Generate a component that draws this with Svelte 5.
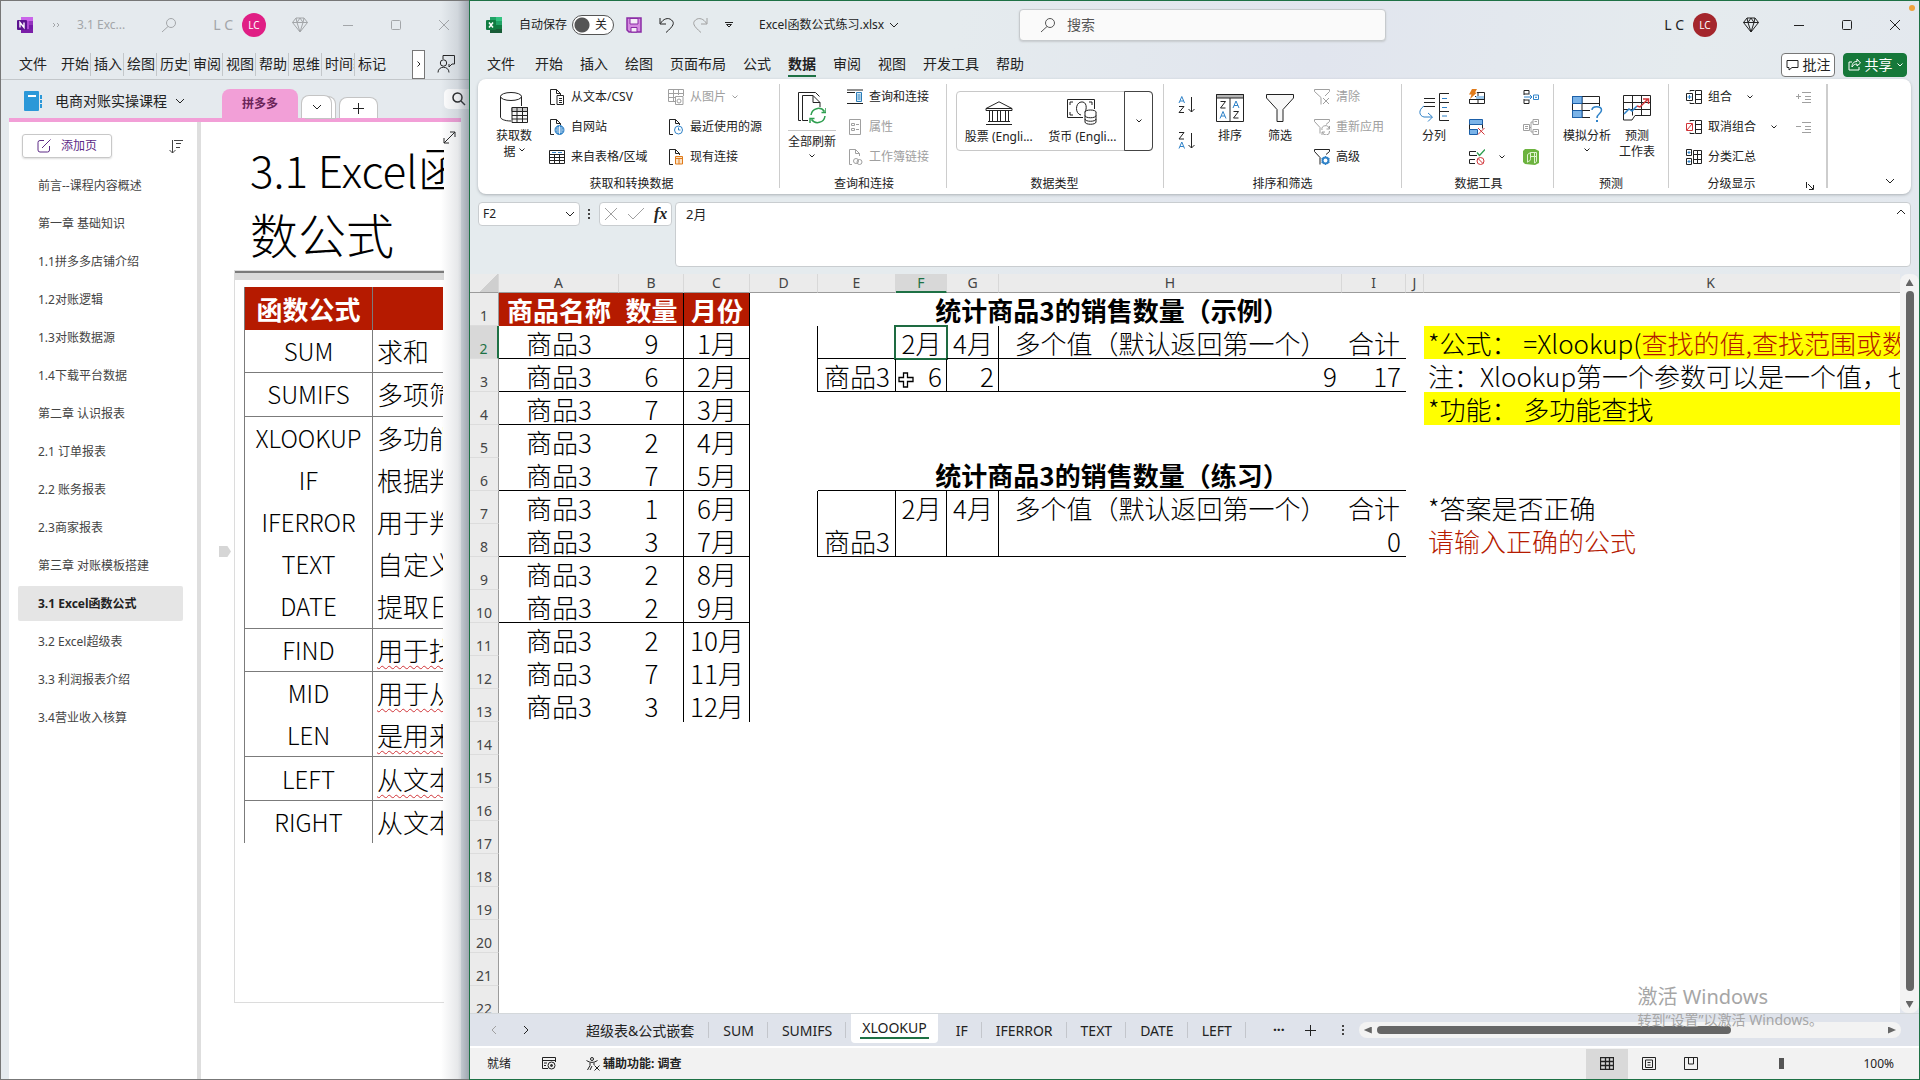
<script>
  // [width, height, markup]
  const icons = {
    onenote: [16, 16, '<path d="M4 0h12v16H4z" fill="#ae4bd5"/><path d="M4 0h12v4H4z" fill="#ca64ea"/><path d="M12 4h4v4h-4z" fill="#9332bf"/><path d="M12 8h4v4h-4z" fill="#7719aa"/><path d="M4 12h12v4H4z" fill="#7a1fa8"/><rect y="3" width="10" height="10" rx="1" fill="#5b1390"/><path d="M3 10.500v-5l4 5v-5" stroke="#fff" stroke-width="1.400"/>'],
    excel: [16, 16, '<path d="M4 0h12v16H4z" fill="#21a366"/><path d="M10 0h6v4h-6z" fill="#33c481"/><path d="M4 8h12v8H4z" fill="#107c41"/><path d="M4 12h12v4H4z" fill="#185c37"/><rect y="3" width="10" height="10" rx="1" fill="#107c41"/><path d="M3 5.500l4 5M7 5.500l-4 5" stroke="#fff" stroke-width="1.500"/>'],
    more: [8, 6, '<path d="M1 1l2 2-2 2M5 1l2 2-2 2"/>'],
    search: [16, 16, '<circle cx="10" cy="6" r="4.500"/><path d="M7 9.500L1 15"/>'],
    find: [14, 14, '<circle cx="5.500" cy="5.500" r="4.500" stroke-width="1.500"/><path d="M9 9l4 4" stroke-width="1.500"/>'],
    gem: [16, 16, '<path d="M4 1h8l3.500 4.500L8 15 .5 5.500zM.5 5.500h15M4 1l1 4.500L8 15l3-9.500L12 1M5 5.500L8 1l3 4.500"/>'],
    min: [10, 10, '<path d="M0 5.500h10"/>'],
    max: [10, 10, '<rect x=".5" y=".5" width="9" height="9" rx="1"/>'],
    close: [10, 10, '<path d="M0 0l10 10M10 0L0 10"/>'],
    person: [18, 18, '<path d="M6 4V.5h11.500V9H15l-3 3V9"/><circle cx="6.500" cy="8" r="3.200"/><path d="M1 17.500c0-7 11-7 11 0"/>'],
    chevDown: [10, 6, '<path d="M1 1l4 4 4-4"/>'],
    chevSmall: [6, 4, '<path d="M.5.5L3 3 5.500.5"/>'],
    chevUp: [10, 6, '<path d="M1 5l4-4 4 4"/>'],
    chevLeft: [6, 10, '<path d="M5 1L1 5l4 4"/>'],
    chevRight: [6, 10, '<path d="M1 1l4 4-4 4"/>'],
    plus: [11, 11, '<path d="M5.500 0v11M0 5.500h11"/>'],
    dots: [4, 12, '<path d="M1 1h2v2H1zM1 5h2v2H1zM1 9h2v2H1z" fill="#444" stroke="none"/>'],
    notebook: [18, 20, '<rect width="15" height="20" rx="1" fill="#2b98d8" stroke="none"/><path d="M4 4h8v2H4z" fill="#fff" stroke="none"/><path d="M16 4h2v4h-2zM16 9h2v3h-2zM16 13h2v4h-2z" fill="#2b98d8" stroke="none"/>'],
    compose: [14, 14, '<path d="M7 1.500H3a2 2 0 0 0-2 2V11a2 2 0 0 0 2 2h7.500a2 2 0 0 0 2-2V7M5 9l8.500-8.500"/>'],
    sortList: [14, 15, '<path d="M3.500 1v13M.5 11l3 3 3-3M5 1.500h9M7 4.500h5M7 8.500h4"/>'],
    expand: [13, 13, '<path d="M1 12L12 1M7 1h5v5M1 7v5h5"/>'],
    save: [16, 16, '<path d="M1 1h14v14H3l-2-2z" fill="#d58be0" stroke="#8a2da5" stroke-width="1.500"/><path d="M4 1.500h8V7H4zM5 10.500h6V15H5z" fill="#f5eef7" stroke="#8a2da5"/>'],
    undo: [16, 16, '<path d="M1 1v6h6M1.500 6.500C4 2 9 0 12.500 3s2 6-5.500 12.500"/>'],
    redo: [16, 16, '<path d="M15 1v6H9M14.500 6.500C12 2 7 0 3.500 3s-2 6 5.500 12.500"/>'],
    custom: [8, 6, '<path d="M0 .5h8M1.500 2.500h5L4 5z"/>'],
    comment: [13, 12, '<path d="M1 1.500h11v7H6l-3 2.500V8.500H1z"/>'],
    share: [13, 13, '<path d="M4 4H1v8h10V9M4 9c0-4 2-5.500 5-5.500V1l3.500 4L9 8V6C7 6 5.500 6.500 4 9z"/>'],
    getData: [28, 32, '<ellipse cx="11" cy="4.500" rx="10.500" ry="4"/><path d="M.5 4.500V25c0 2 4 4 10.500 4M21.500 4.500V14"/><path d="M12 15.500h15.500v15H12z" fill="#f7f7f7"/><path d="M12 15.500h15.500v4H12z" fill="#c9c9c9"/><path d="M12 23.500h15.500M12 27h15.500M17 16v15M22.500 16v15"/>'],
    csv: [16, 16, '<path d="M6 15.500H1.500V.5h6l4 4V6M7.500.5v4h4M8 6.500h6.500v9H8zM10 9.500h3M10 11.500h3M10 13.500h3"/>'],
    web: [16, 16, '<path d="M5 15.500H1.500V.5h6l4 4V6M7.500.5v4h4"/><circle cx="10.500" cy="11" r="4.500" fill="#2f82c8" stroke="#2f82c8"/><path d="M6.500 11h8M10.500 7v8M7.500 9h6M7.500 13h6" stroke="#fff" stroke-width=".8"/>'],
    range: [16, 16, '<path d="M.5 1.500h15v13H.5zM.5 5.500h15M.5 8.500h15M.5 11.500h15M5.500 5.500v9M10.500 5.500v9"/><path d="M3 3.500h4M9 3.500h4" stroke="#2f82c8"/>'],
    picture: [16, 16, '<path d="M8 12.500H.5V.5h15V7M.5 4.500h15M.5 8.500H8M5.500.5v12M10.500.5V6M7.500 7.500H15v8H7.500z"/><circle cx="11" cy="12" r="2"/>'],
    recent: [16, 16, '<path d="M5 15.500H1.500V.5h6l4 4V6M7.500.5v4h4"/><circle cx="10.500" cy="11" r="4" stroke="#2f82c8"/><path d="M10.500 8.500V11h2" stroke="#2f82c8"/>'],
    existing: [16, 16, '<path d="M5 15.500H1.500V.5h6l4 4V6M7.500.5v4h4"/><path d="M7.500 7.500h7v7.500h-7z" fill="#fbe3c8" stroke="#e07b1a"/><path d="M7.500 9.500h7M11 9.500V15" stroke="#e07b1a"/>'],
    refresh: [28, 32, '<path d="M3 28.500H.5V.5h17l4 4"/><path d="M10 28.500H4.500V3.500H15l7 7V15M15 3.500v7h7"/><path d="M13 23a7.500 7.500 0 0 1 13.500-3.500M28 16v4.500h-4.500M27 24a7.500 7.500 0 0 1-13.500 3.500M12 31v-4.500h4.500" stroke="#2e9e4f" stroke-width="1.500"/>'],
    queries: [16, 16, '<path d="M0 1h16M0 14.500h16M0 3.500h8"/><path d="M9.500 3.500h5v9h-5z" stroke="#2b7cb8" fill="#d9ecf8"/><path d="M10.500 6h3M10.500 8h3M10.500 10h3" stroke="#2b7cb8"/>'],
    props: [16, 16, '<path d="M2.500.5h11v15h-11zM4.500 4.500h3v2h-3zM4.500 9.500h3v2h-3zM9 5.500h3M9 10.500h3"/>'],
    links: [16, 16, '<path d="M5 15.500H2.500V.5h6l4 4V7M8.500.5v4h4"/><circle cx="9" cy="12" r="2.500"/><circle cx="12.500" cy="13" r="2.500"/>'],
    bank: [28, 24, '<path d="M1 7.500L14 .8l13 6.700zM1 7.500v2h26v-2M3 20.500h22M1 23.500h26M4.500 10v10M7.500 10v10M12.500 10v10M15.500 10v10M20.500 10v10M23.500 10v10"/>'],
    money: [30, 26, '<path d="M16 18.500H.5V.5h27V10M3 6V3h3M3 13v3h3M22 3h3v3M14 16c-6-1-6-12 0-13s6 7 4 10"/><ellipse cx="23.500" cy="13" rx="5.500" ry="2"/><path d="M18 13v10c0 3 11 3 11 0V13M18 16.500c0 3 11 3 11 0M18 20c0 3 11 3 11 0" fill="#fff"/>'],
    sortAZ: [17, 18, '<path d="M1 7l2.800-6.500L6.500 7M2 5h3.600" stroke="#2f82c8"/><path d="M1 10.500h5L1 16.500h5M13.500 1v15M10.500 13l3 3 3-3"/>'],
    sortZA: [17, 18, '<path d="M1 .500h5L1 7h5M13.500 1v15M10.500 13l3 3 3-3"/><path d="M1 16.500l2.800-6.500 2.700 6.500M2 14.500h3.600" stroke="#2f82c8"/>'],
    sort: [28, 28, '<path d="M.5.5h27v27H.5zM14 4v24"/><path d="M.5.5h27v3.500H.5z" fill="#b5b5b5"/><path d="M4.500 7.500h5L4.500 14h5M17.500 17.500h5l-5 6.500h5"/><path d="M4 24.500l3-7 3 7M5 22h4M17 14l3-7 3 7M18 11.500h4" stroke="#2f82c8"/>'],
    funnel: [28, 28, '<path d="M.5.5h27v3.500L17 15.500v12h-6v-12L.5 4z" fill="#f7f7f7"/>'],
    clear: [16, 16, '<path d="M7 15.500V8.500L.5 2.500v-2h15v2L11 7"/><path d="M9 9l6 6M15 9l-6 6"/>'],
    reapply: [16, 16, '<path d="M6 14.500V8.500L.5 2.500v-2h15v2L12 5.500"/><path d="M8 11a3.500 3.500 0 0 1 7-1.500M15.500 7v3h-3M15.500 12a3.500 3.500 0 0 1-7 1M8 16v-3h3"/>'],
    advanced: [16, 16, '<path d="M6 15.500V8.500L.5 2.500v-2h15v2L12 5.500"/><circle cx="11.500" cy="11.500" r="3" stroke="#2f82c8" stroke-width="2"/><path d="M11.500 7v2M11.500 14v2M7.500 9.500l2 1M13.500 12.500l2 1M7.500 13.500l2-1M13.500 10.500l2-1" stroke="#2f82c8"/>'],
    columns: [30, 30, '<path d="M5 5.500h11M5 9.500h11M5 13.500h11M30 .5h-9.500v27H30M20.500 9.500H30M20.500 18.500H30"/><path d="M23 5.500h5M23 14.500h5M23 23h5M5 13C-1 17 0 23 5 24h8M9 20l4.500 4L9 28.500" stroke="#2f82c8"/>'],
    flash: [16, 16, '<path d="M8 3.500h7.500v11H.500V10M.5 10.500h15M6 7.500h9.500M9 4v10"/><path d="M7 7h8v3H7z" fill="#9cc8ec" stroke="none"/><path d="M3 0h5L6 3.500h2L1 10l1.500-4.500H0z" fill="#e07b1a" stroke="none"/>'],
    dupes: [16, 16, '<path d="M.5.5h13v5H.5zM.5 10.500h8v5h-8z" fill="#7ab3e8" stroke="#1b5fa8"/><path d="M.5 5.500v5M13.500 5.500v4"/><path d="M9 9l6.500 6.500M15.500 9L9 15.500" stroke="#d13438"/>'],
    validate: [16, 16, '<path d="M7 2.500H.500v4H8M6 10.500H.500v4H6"/><path d="M8 3.500l2.500 3L16 .5" stroke="#2e9e4f" stroke-width="1.300"/><circle cx="11.500" cy="12" r="3.500" stroke="#d13438"/><path d="M9 9.500l5 5" stroke="#d13438"/>'],
    consolidate: [16, 16, '<path d="M1 5V1.500h5V5M1 11v3.500h5V11M1 5h5M1 11h5M1 5v1M1 10v1"/><path d="M10.500 6h5v4.500h-5zM1 8h8M6.500 5.500L9 8l-2.500 2.500M12 8.300h2" stroke="#2f82c8"/>'],
    relations: [16, 16, '<path d="M.5 5.500h6v6h-6zM10 .5h5.500v5H10zM10 10.500h5.500v5H10zM6.500 8.500H8V3h2M8 8.500V13h2M2 7.500h3M2 9.500h3M11.500 2.500h2.500M11.500 12.500h2.500"/>'],
    model: [16, 16, '<path d="M2 0h10l4 2v12l-4 2-10-1-2-2V2z" fill="#6cb33f" stroke="none"/><path d="M4.500 13.500v-8l3-2h6v9l-2 1.500M7.500 3.500v6c0 2-1 3-3 3M11.500 3.500V14M7.500 7.500h6" stroke="#dff2d0"/>'],
    whatIf: [31, 28, '<path d="M.5 2.500h27v21H.5zM.5 9.500h27M.5 16.500h27M10 2.500v21"/><path d="M.5 2.500H10v7H.5zM.5 16.500H10v7H.5z" fill="#7ab3e8" stroke="#1b5fa8"/><path d="M18 12h13v16H18z" fill="#fff" stroke="none"/><path d="M20 16c0-4.500 9.500-4.500 9.500 0 0 4-4.500 3.500-4.500 8" stroke="#2f82c8" stroke-width="1.500"/><path d="M24 26h2v2h-2z" fill="#2f82c8" stroke="none"/>'],
    forecast: [28, 26, '<path d="M.5.5h27v20H12l-3 4.500H.5zM.5 7.500h27M.5 14.500h27M9.500.5v20M18.500.5v20"/><path d="M1 19l5-5 3 2 5-5" stroke="#2f82c8" stroke-width="1.500"/><path d="M14 11l3 1 8-8M20 4h5.500v5" stroke="#d13438" stroke-width="1.500"/>'],
    group: [16, 16, '<path d="M.5 4.500h6v7h-6zM4 2.500V1.500h4.500M4 13.500v1h4.500M9.500 1.500h6v13h-6zM9.500 5.500h6M9.500 10.500h6"/><path d="M3.500 6v4M1.500 8h4" stroke="#2f82c8"/>'],
    ungroup: [16, 16, '<path d="M4 2.500V1.500h4.500M4 13.500v1h4.500M9.500 1.500h6v13h-6zM9.500 5.500h6M9.500 10.500h6"/><path d="M.5 4.500h6v7h-6zM1 11l5-6" stroke="#d13438"/>'],
    subtotal: [16, 16, '<path d="M.5.5h5v6h-5zM.5 9.500h5v6h-5zM7.500 1.500h8v13h-8zM7.500 5.500h8M7.500 10.500h8M11.500 1.500v13"/><path d="M3 2v3M1.500 3.500h3M3 11v3M1.500 12.500h3" stroke="#2f82c8"/>'],
    showDetail: [15, 11, '<path d="M0 4.500h5M2.500 2v5M6 .5h9M9 4.500h6M9 7.500h6M6 10.500h9"/>'],
    hideDetail: [15, 11, '<path d="M0 4.500h5M6 .5h9M9 4.500h6M9 7.500h6M6 10.500h9"/>'],
    launcher: [8, 8, '<path d="M.5 0v6M2 2l5 5M7.500 3v4.500H3"/>'],
    cross: [13, 13, '<path d="M0 0l12 12M12 0L0 12"/>'],
    check: [16, 12, '<path d="M0 6l5 5L16 0"/>'],
    macro: [14, 13, '<path d="M6 11.500H.5V.5h13V5M.5 3.500h13M2 6h3M2 8.500h2"/><circle cx="9.500" cy="8.500" r="3.500"/><circle cx="9.500" cy="8.500" r="1" fill="#333"/>'],
    access: [14, 14, '<circle cx="6" cy="2" r="1.500"/><path d="M.5 3.500c4 2.500 7 2.500 11 0M4 5.500v3L1.500 13M8 5.500V8M6 9l-2 4M8.500 8.500l5 5M13.500 8.500l-5 5"/>'],
    viewNormal: [14, 13, '<path d="M.5.5h13v12H.5zM.5 4.500h13M.5 8.500h13M5.500.5v12M9.500.5v12" stroke-width="1.300"/>'],
    viewPage: [14, 13, '<path d="M.5.5h13v12H.5zM3.500 3h7v7.500h-7zM5.500 5.500h3M5.500 8h3"/>'],
    viewBreak: [14, 13, '<path d="M.5.5h13v12H.5zM4.500.5v6.500h5V.5"/>'],
    cellCursor: [16, 16, '<path d="M5.500 1h4v4.500H15v4H9.500V15h-4V9.500H1v-4h4.500z" fill="#fff" stroke="#000" stroke-width="1.300"/>'],
  };

  const noteTabs = ['开始', '插入', '绘图', '历史记录', '审阅', '视图', '帮助', '思维', '时间轴', '标记'];
  const pages = [
    '前言--课程内容概述', '第一章 基础知识', '1.1拼多多店铺介绍', '1.2对账逻辑', '1.3对账数据源',
    '1.4下载平台数据', '第二章 认识报表', '2.1 订单报表', '2.2 账务报表', '2.3商家报表',
    '第三章 对账模板搭建', '3.1 Excel函数公式', '3.2 Excel超级表', '3.3 利润报表介绍', '3.4营业收入核算',
  ];
  let currentPage = '3.1 Excel函数公式';

  // name, description, line below, flagged by the spell checker
  const formulas = [
    ['SUM', '求和', true], ['SUMIFS', '多项筛选', true], ['XLOOKUP', '多功能查找', false],
    ['IF', '根据判断', false], ['IFERROR', '用于判断', false], ['TEXT', '自定义格式', false],
    ['DATE', '提取日期', true], ['FIND', '用于找到', true, true], ['MID', '用于从文本', false, true],
    ['LEN', '是用来计算', true, true], ['LEFT', '从文本左', true, true], ['RIGHT', '从文本右', false],
  ];

  const ribbonTabs = ['文件', '开始', '插入', '绘图', '页面布局', '公式', '数据', '审阅', '视图', '开发工具', '帮助'];
  let currentTab = '数据';
  const sheets = ['超级表&公式嵌套', 'SUM', 'SUMIFS', 'XLOOKUP', 'IF', 'IFERROR', 'TEXT', 'DATE', 'LEFT'];
  let currentSheet = 'XLOOKUP';

  const cols = ['A', 'B', 'C', 'D', 'E', 'F', 'G', 'H', 'I', 'J', 'K'];
  const rows = Array.from({ length: 22 }, (_, i) => i + 1);

  const values = {
    A1: '商品名称', B1: '数量', C1: '月份',
    E1: '统计商品3的销售数量（示例）',
    F2: '2月', G2: '4月', H2: '多个值（默认返回第一个）', I2: '合计',
    E3: '商品3', F3: 6, G3: 2, H3: 9, I3: 17,
    E6: '统计商品3的销售数量（练习）',
    F7: '2月', G7: '4月', H7: '多个值（默认返回第一个）', I7: '合计',
    E8: '商品3', I8: 0,
    K2: '*公式： =Xlookup(', K3: '注：Xlookup第一个参数可以是一个值，也可以是多个值',
    K4: '*功能： 多功能查找', K7: '*答案是否正确', K8: '请输入正确的公式',
  };
  [9, 6, 7, 2, 7, 1, 3, 2, 2, 2, 7, 3].forEach((n, i) => {
    values['A' + (i + 2)] = '商品3';
    values['B' + (i + 2)] = n;
    values['C' + (i + 2)] = (i + 1) + '月';
  });

  const merged = (r, c) => (r === 1 || r === 6) && 'FGHI'.includes(c);

  function cellClass(r, c) {
    const out = [];
    if ('ABC'.includes(c) && r <= 13) {
      if (r === 1) out.push('head');
      if (c !== 'A') out.push('line-r');
      if ([2, 3, 4, 6, 8, 10].includes(r)) out.push('line-b');
    }
    if ([2, 3, 7, 8].includes(r)) {
      if (c === 'D' || c === 'G') out.push('line-r');
      if (r !== 2 && (c === 'E' || c === 'F')) out.push('line-r');
    }
    if ('EFGHI'.includes(c) && [2, 3, 6, 8].includes(r)) out.push('line-b');
    if ('FGHI'.includes(c) && [3, 8].includes(r)) out.push('num');
    if (c === 'E' && (r === 1 || r === 6)) out.push('title');
    if (c === 'K') out.push('note');
    if (c === 'K' && (r === 2 || r === 4)) out.push('yellow');
    if (c === 'K' && r === 8) out.push('red');
    return out.join(' ');
  }
</script>

{#snippet icon(name)}
  <svg class="icon" width={icons[name][0]} height={icons[name][1]} viewBox="0 0 {icons[name][0]} {icons[name][1]}" aria-hidden="true">{@html icons[name][2]}</svg>
{/snippet}

{#snippet small(name, text, disabled, arrow)}
  <button class="small" {disabled}>
    {@render icon(name)}
    <span>{text}</span>
    {#if arrow}{@render icon('chevSmall')}{/if}
  </button>
{/snippet}

{#snippet windowButtons()}
  <button class="win" aria-label="Premium">{@render icon('gem')}</button>
  <button class="win" aria-label="最小化">{@render icon('min')}</button>
  <button class="win" aria-label="最大化">{@render icon('max')}</button>
  <button class="win" aria-label="关闭">{@render icon('close')}</button>
{/snippet}

<div class="desktop">
  <section class="onenote">
    <header class="titlebar">
      {@render icon('onenote')}
      <button class="more" aria-label="更多">{@render icon('more')}</button>
      <span class="doc">3.1 Exc...</span>
      <button class="find" aria-label="搜索">{@render icon('search')}</button>
      <span class="user">L C</span>
      <span class="avatar pink">LC</span>
      {@render windowButtons()}
    </header>

    <nav class="note-tabs">
      <button class="file">文件</button>
      {#each noteTabs as tab}
        <button class="note-tab">{tab}</button>
      {/each}
      <button class="scroll-tabs" aria-label="更多选项卡">{@render icon('chevSmall')}</button>
      <button class="people" aria-label="共享">{@render icon('person')}</button>
    </nav>

    <div class="sections">
      <button class="notebook">{@render icon('notebook')}<span>电商对账实操课程</span>{@render icon('chevDown')}</button>
      <button class="section current">拼多多</button>
      <button class="section stack" aria-label="所有分区">{@render icon('chevDown')}</button>
      <button class="section add" aria-label="新建分区">{@render icon('plus')}</button>
      <button class="section-find" aria-label="搜索笔记">{@render icon('find')}</button>
    </div>

    <div class="note-body">
      <aside class="pages">
        <div class="pages-head">
          <button class="add-page">{@render icon('compose')}<span>添加页</span></button>
          <button aria-label="排序">{@render icon('sortList')}</button>
        </div>
        <ul>
          {#each pages as page}
            <li><a href="#page" class:active={page === currentPage} on:click|preventDefault={() => (currentPage = page)}>{page}</a></li>
          {/each}
        </ul>
      </aside>
      <div class="canvas">
        <button class="expand" aria-label="全屏">{@render icon('expand')}</button>
        <h1><span class="latin">3.1 Excel</span>函<br />数公式</h1>
        <div class="note-box">
          <table class="formulas">
            <colgroup><col class="fn" /><col class="desc" /></colgroup>
            <thead><tr><th>函数公式</th><th></th></tr></thead>
            <tbody>
              {#each formulas as [name, text, line, wavy]}
                <tr class:line>
                  <td>{name}</td>
                  <td><span class:wavy>{text}</span></td>
                </tr>
              {/each}
            </tbody>
          </table>
          <span class="handle"></span>
        </div>
      </div>
    </div>
    <div class="window-shadow"></div>
  </section>

  <section class="excel">
    <header class="titlebar">
      <div class="quick">
        {@render icon('excel')}
        <label class="autosave">
          <span>自动保存</span>
          <span class="switch"><input type="checkbox" /><span>关</span></span>
        </label>
        <button aria-label="保存">{@render icon('save')}</button>
        <button aria-label="撤消">{@render icon('undo')}</button>
        <button class="dim" aria-label="恢复">{@render icon('redo')}</button>
        <button class="customise" aria-label="自定义">{@render icon('custom')}</button>
        <button class="filename"><span>Excel函数公式练习.xlsx</span>{@render icon('chevDown')}</button>
      </div>
      <label class="search">
        {@render icon('search')}
        <input type="search" placeholder="搜索" aria-label="搜索" />
      </label>
      <span class="user">L C</span>
      <span class="avatar red-bg">LC</span>
      {@render windowButtons()}
      <span class="dot"></span>
    </header>

    <nav class="tabs">
      {#each ribbonTabs as tab}
        <button class="tab" class:active={tab === currentTab} on:click={() => (currentTab = tab)}>{tab}</button>
      {/each}
      <button class="comments">{@render icon('comment')}<span>批注</span></button>
      <button class="share">{@render icon('share')}<span>共享</span>{@render icon('chevSmall')}</button>
    </nav>

    <div class="ribbon">
      <div class="group g-get">
        <div class="group-body">
          <button class="big">{@render icon('getData')}<span>获取数<br />据 {@render icon('chevSmall')}</span></button>
          <div class="small-cols">
            {@render small('csv', '从文本/CSV')}
            {@render small('picture', '从图片', true, true)}
            {@render small('web', '自网站')}
            {@render small('recent', '最近使用的源')}
            {@render small('range', '来自表格/区域')}
            {@render small('existing', '现有连接')}
          </div>
        </div>
        <div class="group-label">获取和转换数据</div>
      </div>

      <div class="group g-query">
        <div class="group-body">
          <button class="big split">{@render icon('refresh')}<span>全部刷新</span>{@render icon('chevSmall')}</button>
          <div class="small-col">
            {@render small('queries', '查询和连接')}
            {@render small('props', '属性', true)}
            {@render small('links', '工作簿链接', true)}
          </div>
        </div>
        <div class="group-label">查询和连接</div>
      </div>

      <div class="group g-types">
        <div class="group-body">
          <div class="gallery">
            <button>{@render icon('bank')}<span>股票 (Engli...</span></button>
            <button>{@render icon('money')}<span>货币 (Engli...</span></button>
            <button class="drop" aria-label="更多数据类型">{@render icon('chevSmall')}</button>
          </div>
        </div>
        <div class="group-label">数据类型</div>
      </div>

      <div class="group g-sort">
        <div class="group-body">
          <div class="az">
            <button aria-label="升序">{@render icon('sortAZ')}</button>
            <button aria-label="降序">{@render icon('sortZA')}</button>
          </div>
          <button class="big narrow">{@render icon('sort')}<span>排序</span></button>
          <button class="big narrow">{@render icon('funnel')}<span>筛选</span></button>
          <div class="small-col">
            {@render small('clear', '清除', true)}
            {@render small('reapply', '重新应用', true)}
            {@render small('advanced', '高级')}
          </div>
        </div>
        <div class="group-label">排序和筛选</div>
      </div>

      <div class="group g-tools">
        <div class="group-body">
          <button class="big">{@render icon('columns')}<span>分列</span></button>
          <div class="tool-grid">
            <button aria-label="快速填充">{@render icon('flash')}</button>
            <button aria-label="合并计算">{@render icon('consolidate')}</button>
            <button aria-label="删除重复值">{@render icon('dupes')}</button>
            <button class="dim" aria-label="关系">{@render icon('relations')}</button>
            <button class="with-arrow" aria-label="数据验证">{@render icon('validate')}{@render icon('chevSmall')}</button>
            <button aria-label="数据模型">{@render icon('model')}</button>
          </div>
        </div>
        <div class="group-label">数据工具</div>
      </div>

      <div class="group g-forecast">
        <div class="group-body">
          <button class="big narrow">{@render icon('whatIf')}<span>模拟分析</span>{@render icon('chevSmall')}</button>
          <button class="big narrow">{@render icon('forecast')}<span>预测<br />工作表</span></button>
        </div>
        <div class="group-label">预测</div>
      </div>

      <div class="group g-outline">
        <div class="group-body">
          <div class="small-col">
            {@render small('group', '组合', false, true)}
            {@render small('ungroup', '取消组合', false, true)}
            {@render small('subtotal', '分类汇总')}
          </div>
          <div class="detail">
            <button class="dim" aria-label="显示明细">{@render icon('showDetail')}</button>
            <button class="dim" aria-label="隐藏明细">{@render icon('hideDetail')}</button>
          </div>
        </div>
        <div class="group-label"><span>分级显示</span><button class="launch" aria-label="分级显示设置">{@render icon('launcher')}</button></div>
      </div>
      <button class="collapse" aria-label="折叠功能区">{@render icon('chevDown')}</button>
    </div>

    <div class="formula-bar">
      <div class="name-box">
        <input type="text" value="F2" aria-label="名称框" />
        <button aria-label="名称列表">{@render icon('chevDown')}</button>
      </div>
      {@render icon('dots')}
      <div class="fx">
        <button class="dim" aria-label="取消">{@render icon('cross')}</button>
        <button class="dim" aria-label="输入">{@render icon('check')}</button>
        <button class="fn-button">fx</button>
      </div>
      <div class="formula">
        <textarea aria-label="编辑栏">2月</textarea>
        <button aria-label="折叠编辑栏">{@render icon('chevUp')}</button>
      </div>
    </div>

    <div class="sheet">
      <div class="grid">
        <table class="cells">
          <colgroup>
            <col class="w-num" />
            {#each cols as c}<col class="w-{c}" />{/each}
          </colgroup>
          <thead>
            <tr>
              <th class="corner"></th>
              {#each cols as c}<th class:picked={c === 'F'}>{c}</th>{/each}
            </tr>
          </thead>
          <tbody>
            {#each rows as r}
              <tr>
                <th class:picked={r === 2}>{r}</th>
                {#each cols as c}
                  {#if !merged(r, c)}
                    <td class={cellClass(r, c)} colspan={c === 'E' && (r === 1 || r === 6) ? 5 : 1}>
                      {values[c + r] ?? ''}{#if c === 'K' && r === 2}<span class="red">查找的值,查找范围或数组,返回范围</span>{/if}
                      {#if c === 'F' && r === 2}<span class="selection"></span>{/if}
                      {#if c === 'F' && r === 3}<span class="pointer">{@render icon('cellCursor')}</span>{/if}
                    </td>
                  {/if}
                {/each}
              </tr>
            {/each}
          </tbody>
        </table>
      </div>
      <div class="v-scroll">
        <span class="tri up"></span>
        <span class="thumb"></span>
        <span class="tri down"></span>
      </div>
    </div>

    <div class="sheet-bar">
      <button class="step dim" aria-label="上一个">{@render icon('chevLeft')}</button>
      <button class="step" aria-label="下一个">{@render icon('chevRight')}</button>
      <div class="sheet-tabs">
        {#each sheets as s}
          <button class="sheet-tab" class:active={s === currentSheet} on:click={() => (currentSheet = s)}><span>{s}</span></button>
        {/each}
      </div>
      <button class="step ellipsis">···</button>
      <button class="step" aria-label="新工作表">{@render icon('plus')}</button>
      <button class="step" aria-label="调整">{@render icon('dots')}</button>
      <div class="h-scroll">
        <span class="tri left"></span>
        <span class="track"><span class="thumb"></span></span>
        <span class="tri right"></span>
      </div>
    </div>

    <footer class="status">
      <span class="ready">就绪</span>
      {@render icon('macro')}
      <button class="access">{@render icon('access')}<span>辅助功能: 调查</span></button>
      <button class="view active" aria-label="普通">{@render icon('viewNormal')}</button>
      <button class="view" aria-label="页面布局">{@render icon('viewPage')}</button>
      <button class="view" aria-label="分页预览">{@render icon('viewBreak')}</button>
      <input class="zoom" type="range" min="10" max="190" value="100" aria-label="缩放" />
      <span class="percent">100%</span>
    </footer>

    <div class="activate">
      <p class="big-line">激活 Windows</p>
      <p>转到“设置”以激活 Windows。</p>
    </div>
  </section>
</div>

<style>
  :global(body) {
    margin: 0;
    overflow: hidden;
  }

  .desktop {
    display: flex;
    height: 100vh;
    color: #222;
    font: 12px/16px "Noto Sans", "Noto Sans CJK SC", sans-serif;
    background: #e5eaee;
  }

  .desktop *,
  .desktop *::before {
    box-sizing: border-box;
  }

  button {
    display: flex;
    align-items: center;
    justify-content: center;
    padding: 0;
    border: 0;
    background: none;
    color: inherit;
    font: inherit;
    white-space: nowrap;
  }

  input,
  textarea {
    font: inherit;
    color: inherit;
    border: 0;
    padding: 0;
    background: none;
    outline: none;
  }

  .icon {
    flex: none;
    fill: none;
    stroke: currentColor;
  }

  .dim,
  .small:disabled {
    color: #a0a0a0;
  }

  .titlebar {
    display: flex;
    align-items: center;
    flex: none;
    height: 48px;
  }

  .titlebar > .icon,
  .quick > .icon {
    stroke: none;
  }

  .win {
    width: 48px;
    height: 48px;
  }

  .avatar {
    width: 24px;
    height: 24px;
    margin-right: 10px;
    border-radius: 50%;
    color: #fff;
    font-size: 10px;
    line-height: 24px;
    text-align: center;
  }

  .pink {
    background: #e01e84;
  }

  .red-bg {
    background: #a4262c;
  }

  .user {
    margin-left: auto;
    margin-right: 9px;
    font-size: 14px;
  }

  /* OneNote */

  .onenote {
    position: relative;
    display: flex;
    flex-direction: column;
    flex: none;
    width: 469px;
    border: 1px solid #777;
    border-right: 0;
    overflow: hidden;
  }

  .onenote .titlebar {
    padding: 0 1px 0 16px;
    color: #a3a6a9;
  }

  .more {
    margin: 0 17px 0 19px;
  }

  .find {
    margin-left: 36px;
  }

  .note-tabs {
    display: flex;
    align-items: center;
    flex: none;
    height: 31px;
    padding-left: 18px;
    border-bottom: 1px solid #c3c7ca;
    font-size: 14px;
  }

  .file {
    margin-right: 10px;
  }

  .note-tab {
    justify-content: flex-start;
    width: 33px;
    height: 23px;
    padding-left: 3px;
    overflow: hidden;
    border-left: 1px solid #c3c7ca;
  }

  .file + .note-tab {
    border-color: transparent;
  }

  .scroll-tabs {
    width: 13px;
    height: 29px;
    margin-left: 25px;
    background: #fff;
    border: 1px solid #777;
  }

  .scroll-tabs .icon {
    transform: rotate(-90deg);
  }

  .people {
    margin-left: 12px;
  }

  .sections {
    display: flex;
    align-items: flex-end;
    flex: none;
    height: 42px;
    margin: 0 8px;
    border-bottom: 4px solid #f29fd7;
    border-radius: 4px 4px 0 0;
  }

  .notebook {
    gap: 8px;
    height: 38px;
    padding: 4px 0 0 15px;
    font-size: 14px;
  }

  .notebook .icon:first-child {
    margin-right: 5px;
  }

  .section {
    height: 23px;
    margin-left: 3px;
    border: 1px solid #c4c4c4;
    border-bottom: 0;
    border-radius: 8px 8px 0 0;
    background: #fff;
  }

  .section.current {
    width: 76px;
    height: 29px;
    margin-left: 37px;
    border: 0;
    background: #f29fd7;
    color: #6b2459;
    font-weight: bold;
  }

  .section.stack {
    width: 31px;
    box-shadow: 4px 1px 0 -1px #fff, 4px 1px 0 0 #c4c4c4;
  }

  .section.add {
    width: 39px;
    height: 21px;
    margin-left: 7px;
  }

  .section-find {
    width: 25px;
    height: 20px;
    margin: 0 -8px 9px auto;
    padding-left: 5px;
    border-radius: 5px 0 0 5px;
    background: #fff;
  }

  .note-body {
    display: flex;
    flex: 1;
    min-height: 0;
    margin: 0 8px;
    background: #fff;
  }

  .pages {
    flex: none;
    width: 192px;
    padding: 12px 14px 0 9px;
    border-right: 4px solid #dedede;
    color: #444;
  }

  .pages-head {
    display: flex;
    justify-content: space-between;
    margin: 0 0 10px 4px;
  }

  .add-page {
    gap: 10px;
    width: 90px;
    height: 24px;
    border: 1px solid #c8c8c8;
    border-radius: 3px;
    box-shadow: 0 1px 2px #ddd;
    color: #5c2a86;
  }

  ul {
    margin: 0;
    padding: 0;
    list-style: none;
  }

  li a {
    display: block;
    height: 35px;
    margin-bottom: 3px;
    padding-left: 20px;
    border-radius: 2px;
    color: inherit;
    line-height: 35px;
    text-decoration: none;
    white-space: nowrap;
  }

  li a.active {
    background: #e5e5e5;
    color: #222;
    font-weight: bold;
  }

  .canvas {
    display: flex;
    flex-direction: column;
    flex: 1;
    min-width: 0;
    padding: 9px 17px 0 33px;
  }

  .expand {
    align-self: flex-end;
    margin-right: -12px;
  }

  h1 {
    flex: none;
    margin: -9px 0 5px 16px;
    overflow: hidden;
    color: #000;
    font: 300 48px/64px "Noto Sans CJK SC", sans-serif;
    white-space: nowrap;
  }

  .latin {
    font-size: 44px;
  }

  .note-box {
    position: relative;
    flex: none;
    height: 733px;
    border: 1px solid #dcdcdc;
    border-right: 0;
  }

  .note-box::before {
    content: "";
    display: block;
    height: 9px;
    background: #dadada;
    border-top: 2px solid #7b7b7b;
  }

  .formulas {
    width: 199px;
    height: 556px;
    margin: 7px 0 0 9px;
    table-layout: fixed;
    border-collapse: collapse;
    color: #000;
    font: 300 26px/36px "Noto Sans CJK SC", sans-serif;
  }

  .formulas .fn {
    width: 128px;
  }

  .formulas th,
  .formulas td {
    padding: 0 0 0 4px;
    border: 0 solid #7b7b7b;
    border-left-width: 1px;
    overflow: hidden;
    white-space: nowrap;
  }

  .formulas th {
    height: 43px;
    background: #b51a00;
    color: #fff;
    font-weight: bold;
  }

  .formulas td:first-child {
    padding: 0;
    font-size: 24px;
    text-align: center;
  }

  .formulas th:first-child {
    padding: 0;
  }

  .line td {
    border-bottom-width: 1px;
  }

  .wavy {
    text-decoration: underline wavy #d13438 1px;
    text-underline-offset: 4px;
  }

  .handle {
    position: absolute;
    top: 275px;
    left: -16px;
    width: 12px;
    height: 11px;
    background: #d6d6d6;
    clip-path: polygon(0 0, 70% 0, 100% 50%, 70% 100%, 0 100%);
  }

  .window-shadow {
    position: absolute;
    top: 0;
    right: 0;
    bottom: 0;
    width: 28px;
    background: linear-gradient(to right, rgba(90, 100, 115, 0), rgba(90, 100, 115, 0.15) 60%, rgba(90, 100, 115, 0.5));
    pointer-events: none;
  }

  /* Excel */

  .excel {
    position: relative;
    display: flex;
    flex-direction: column;
    flex: 1;
    min-width: 0;
    border: 1px solid #1e7145;
    background: linear-gradient(100deg, #e5ebee 30%, #e1e5ee 52%, #e5ebee 75%, #e2e6ee);
  }

  .quick {
    display: flex;
    align-items: center;
    width: 549px;
    padding-left: 16px;
  }

  .autosave {
    display: flex;
    align-items: center;
    gap: 5px;
    margin: 0 12px 0 17px;
  }

  .switch {
    display: grid;
  }

  .switch > * {
    grid-area: 1 / 1;
  }

  .switch input {
    appearance: none;
    width: 42px;
    height: 20px;
    margin: 0;
    border: 1px solid #555;
    border-radius: 10px;
    background: radial-gradient(circle at 9px 9px, #555 7px, #fff 8px);
  }

  .switch span {
    padding-left: 23px;
    line-height: 20px;
  }

  .quick button + button {
    margin-left: 17px;
  }

  .filename {
    gap: 5px;
  }

  .quick .filename {
    margin-left: 26px;
  }

  .search {
    display: flex;
    align-items: center;
    flex: 0 1 367px;
    height: 32px;
    gap: 11px;
    padding-left: 20px;
    border: 1px solid #c6cacd;
    border-radius: 4px;
    background: #fafafa;
    box-shadow: 0 1px 2px #c6cacd;
    color: #555;
    font-size: 14px;
  }

  .search input {
    flex: 1;
    min-width: 0;
  }

  .search input::placeholder {
    color: #555;
  }

  .dot {
    position: absolute;
    top: 4px;
    right: 4px;
    width: 6px;
    height: 6px;
    border-radius: 50%;
    background: #f0a23c;
  }

  .tabs {
    display: flex;
    align-items: center;
    flex: none;
    gap: 17px;
    height: 30px;
    padding: 1px 12px 0 17px;
    font-size: 14px;
  }

  .tab {
    height: 25px;
    padding-top: 1px;
    border-bottom: 2px solid transparent;
  }

  .tab:first-child {
    margin-right: 3px;
  }

  .tab.active {
    border-color: #1e7145;
    font-weight: bold;
  }

  .comments,
  .share {
    gap: 4px;
    width: 54px;
    height: 24px;
    border: 1px solid #777;
    border-radius: 4px;
    background: #fff;
  }

  .comments {
    margin-left: auto;
  }

  .share {
    width: 64px;
    margin-left: -9px;
    border-color: #16783a;
    background: #16783a;
    color: #fff;
  }

  .ribbon {
    display: flex;
    flex: none;
    height: 115px;
    margin: 0 8px;
    border-radius: 8px;
    background: #fff;
    box-shadow: 0 1px 3px #aab0b5;
  }

  .group {
    display: flex;
    flex-direction: column;
    flex: none;
    height: 104px;
    margin-top: 5px;
    border-right: 1px solid #cdcdcd;
  }

  .group-body {
    display: flex;
    flex: none;
    height: 90px;
  }

  .group-label {
    position: relative;
    flex: none;
    line-height: 20px;
    text-align: center;
  }

  .launch {
    position: absolute;
    top: 8px;
    right: 12px;
  }

  .g-get { width: 302px; padding-left: 6px; }
  .g-query { width: 167px; padding-left: 2px; }
  .g-types { width: 217px; padding-left: 9px; }
  .g-sort { width: 238px; padding-left: 14px; }
  .g-tools { width: 152px; padding-left: 2px; }
  .g-forecast { width: 115px; padding-left: 8px; }
  .g-outline { width: 159px; padding-left: 12px; border-right-width: 2px; }
  .g-types .group-label { padding-right: 10px; }
  .g-sort .group-label { padding-right: 14px; }
  .g-forecast .group-label { padding-right: 8px; }
  .g-outline .group-label { padding-right: 44px; }

  .big {
    flex-direction: column;
    justify-content: flex-start;
    width: 60px;
    padding-top: 8px;
    line-height: 16px;
  }

  .big .icon {
    height: 32px;
  }

  .big > span {
    margin-top: 4px;
  }

  .big .icon:not(:first-child),
  .big span .icon {
    height: 4px;
    margin: 4px 0;
  }

  .big.split > span {
    margin-top: 6px;
    border-top: 1px solid #c8c8c8;
    padding-top: 3px;
  }

  .big.narrow {
    width: 50px;
  }

  .small-cols,
  .small-col,
  .tool-grid,
  .detail {
    display: grid;
    grid-template-rows: repeat(3, 30px);
    align-content: start;
    margin-top: -2px;
  }

  .small-cols {
    grid-template-columns: 119px auto;
    margin-left: 2px;
  }

  .small-col {
    margin-left: 2px;
  }

  .small {
    gap: 6px;
    justify-content: flex-start;
    padding-left: 3px;
  }

  .g-outline .small > .icon:last-child:not(:first-child) {
    margin-left: 9px;
  }

  .gallery {
    display: flex;
    width: 197px;
    height: 60px;
    margin-top: 7px;
    border: 1px solid #c8c8c8;
    border-radius: 4px;
  }

  .gallery button {
    flex-direction: column;
    justify-content: flex-end;
    gap: 4px;
    width: 84px;
    padding-bottom: 5px;
  }

  .gallery .drop {
    justify-content: center;
    width: 29px;
    height: 60px;
    margin: -1px -1px 0 auto;
    padding: 0;
    border: 1px solid #444;
    border-radius: 0 4px 4px 0;
  }

  .az {
    display: flex;
    flex-direction: column;
    gap: 18px;
    padding-top: 12px;
    margin-right: 10px;
  }

  .g-sort .small-col {
    margin-left: 6px;
  }

  .tool-grid {
    grid-template-columns: 48px auto;
    margin-left: 5px;
  }

  .tool-grid button {
    justify-content: flex-start;
    gap: 14px;
  }

  .tool-grid button:nth-child(even) {
    padding-left: 6px;
  }

  .detail {
    margin: -2px 15px 0 auto;
  }

  .collapse {
    margin: auto 16px 10px auto;
  }

  .formula-bar {
    display: flex;
    align-items: flex-start;
    flex: none;
    height: 80px;
    padding: 8px 8px 0;
  }

  .formula-bar > .icon {
    margin: 6px 8px 6px 7px;
  }

  .name-box,
  .fx,
  .formula {
    display: flex;
    height: 24px;
    border: 1px solid #c9cdd0;
    border-radius: 4px;
    background: #fff;
  }

  .name-box {
    width: 102px;
    padding: 0 4px;
  }

  .name-box input {
    flex: 1;
    min-width: 0;
    height: 20px;
  }

  .fx {
    align-items: center;
    gap: 10px;
    width: 73px;
    padding-left: 5px;
  }

  .fn-button {
    font: italic bold 16px/20px "Liberation Serif", serif;
  }

  .formula {
    flex: 1;
    align-items: flex-start;
    height: 65px;
    margin-left: 3px;
    padding: 1px 4px 0 10px;
  }

  .formula textarea {
    flex: 1;
    height: 58px;
    resize: none;
    line-height: 20px;
    font-size: 13px;
  }

  .formula button {
    margin-top: 5px;
  }

  .sheet {
    display: flex;
    flex: 1;
    min-height: 0;
  }

  .grid {
    flex: 1;
    min-width: 0;
    overflow: hidden;
    background: #fff;
  }

  /* column K runs on past the edge of the view */
  .cells {
    width: calc(100% + 98px);
    table-layout: fixed;
    border-spacing: 0;
    color: #000;
    font: 300 26px/32px "Noto Sans CJK SC", sans-serif;
  }

  .w-num { width: 29px; }
  .w-A { width: 120px; }
  .w-B { width: 65px; }
  .w-C { width: 66px; }
  .w-D { width: 68px; }
  .w-E { width: 78px; }
  .w-F { width: 51px; }
  .w-G { width: 52px; }
  .w-H { width: 343px; }
  .w-I { width: 64px; }
  .w-J { width: 18px; }

  .cells th {
    padding: 0;
    border: 0 solid #c6c6c6;
    border-right-width: 1px;
    background: #ebebeb;
    color: #444;
    font: 14px/18px "Noto Sans", sans-serif;
  }

  .cells thead th {
    height: 19px;
    border-bottom: 1px solid #9b9b9b;
    border-right-color: #d8d8d8;
  }

  .cells tbody th {
    height: 33px;
    border-right-color: #9b9b9b;
    border-bottom: 1px solid #dcdcdc;
    vertical-align: bottom;
  }

  .cells .corner {
    background: linear-gradient(135deg, #ebebeb 60%, #cfcfcf 60%);
  }

  .cells th.picked {
    background: #d8d8d8;
    color: #1e7145;
  }

  .cells thead th.picked {
    border-bottom: 2px solid #1e7145;
    line-height: 17px;
  }

  .cells tbody th.picked {
    border-right: 2px solid #1e7145;
  }

  .cells td {
    --right: transparent;
    --bottom: transparent;
    position: relative;
    height: 33px;
    padding: 1px 0 0;
    box-shadow: inset -1px 0 var(--right), inset 0 -1px var(--bottom);
    text-align: center;
    white-space: nowrap;
  }

  .cells td.head {
    background: #b51a00;
    color: #fff;
    font-weight: bold;
  }

  .cells tbody tr:first-child td {
    height: 33px;
    padding: 0;
  }

  .cells td.title {
    font-weight: bold;
  }

  .cells td.num {
    padding-right: 5px;
    text-align: right;
  }

  .cells td.line-r {
    --right: #000;
  }

  .cells td.line-b {
    --bottom: #000;
  }

  .cells td.note {
    padding-left: 4px;
    text-align: left;
  }

  .cells td.yellow {
    background: #ff0;
  }

  .cells .red {
    color: #b51a00;
  }

  .selection {
    position: absolute;
    inset: -1px -1px -1px -2px;
    border: 2px solid #1e6b41;
  }

  .pointer {
    position: absolute;
    top: 13px;
    left: 2px;
    display: flex;
  }

  .v-scroll {
    display: flex;
    flex-direction: column;
    align-items: center;
    flex: none;
    width: 19px;
    padding: 5px 0;
    gap: 5px;
    border-radius: 8px;
    background: #f3f3f3;
  }

  .thumb {
    border-radius: 4px;
    background: #666;
  }

  .v-scroll .thumb {
    flex: 1;
    width: 8px;
    margin-bottom: 5px;
  }

  .tri {
    flex: none;
    width: 8px;
    height: 7px;
    background: #666;
  }

  .up { clip-path: polygon(50% 0, 100% 100%, 0 100%); }
  .down { clip-path: polygon(0 0, 100% 0, 50% 100%); }
  .left { clip-path: polygon(100% 0, 100% 100%, 0 50%); }
  .right { clip-path: polygon(0 0, 100% 50%, 0 100%); }

  .sheet-bar {
    display: flex;
    align-items: center;
    flex: none;
    height: 35px;
    padding: 0 18px 0 8px;
    border-top: 1px solid #d4d8db;
    border-bottom: 2px solid #fff;
    background: #dfe3eb;
    font-size: 14px;
  }

  .step {
    width: 32px;
    height: 30px;
  }

  .sheet-tabs {
    display: flex;
    align-self: stretch;
    margin-left: 30px;
  }

  .sheet-tab {
    position: relative;
    height: 33px;
    padding: 0 14px;
  }

  .sheet-tab::after {
    content: "";
    position: absolute;
    top: 8px;
    right: 0;
    height: 16px;
    border-right: 1px solid #c3c6cc;
  }

  .sheet-tab:first-child {
    padding-right: 15px;
  }

  .sheet-tab.active {
    height: 29px;
    margin: 0 4px 0 5px;
    padding: 0 9px;
    border-radius: 0 0 4px 4px;
    background: #fff;
  }

  .sheet-tab.active::after {
    display: none;
  }

  .sheet-tab.active span {
    padding: 0 2px;
    border-bottom: 2px solid #1e7145;
    line-height: 18px;
  }

  .ellipsis {
    margin-left: 17px;
    font-weight: bold;
  }

  .h-scroll {
    display: flex;
    align-items: center;
    flex: 1;
    gap: 5px;
    height: 16px;
    padding: 0 5px;
    border-radius: 8px;
    background: #f3f3f3;
  }

  .track {
    display: flex;
    flex: 1;
  }

  .track .thumb {
    width: 70%;
    height: 8px;
  }

  .status {
    display: flex;
    align-items: center;
    flex: none;
    height: 31px;
    padding: 0 25px 0 17px;
    background: #f2f2f2;
  }

  .ready {
    margin-right: 31px;
  }

  .access {
    gap: 3px;
    margin: 0 auto 0 30px;
    font-weight: bold;
  }

  .view {
    width: 42px;
    height: 30px;
  }

  .view.active {
    background: #d9d9d9;
  }

  .zoom {
    appearance: none;
    width: 110px;
    height: 12px;
    margin: 0 27px 0 14px;
  }

  .zoom::-webkit-slider-thumb {
    appearance: none;
    width: 5px;
    height: 11px;
    background: #555;
  }

  .activate {
    position: absolute;
    right: 96px;
    bottom: 50px;
    color: #a6a6a6;
    font-size: 14px;
    line-height: 18px;
    pointer-events: none;
  }

  .activate p {
    margin: 0;
  }

  .activate .big-line {
    font-size: 20px;
    line-height: 28px;
  }
</style>
